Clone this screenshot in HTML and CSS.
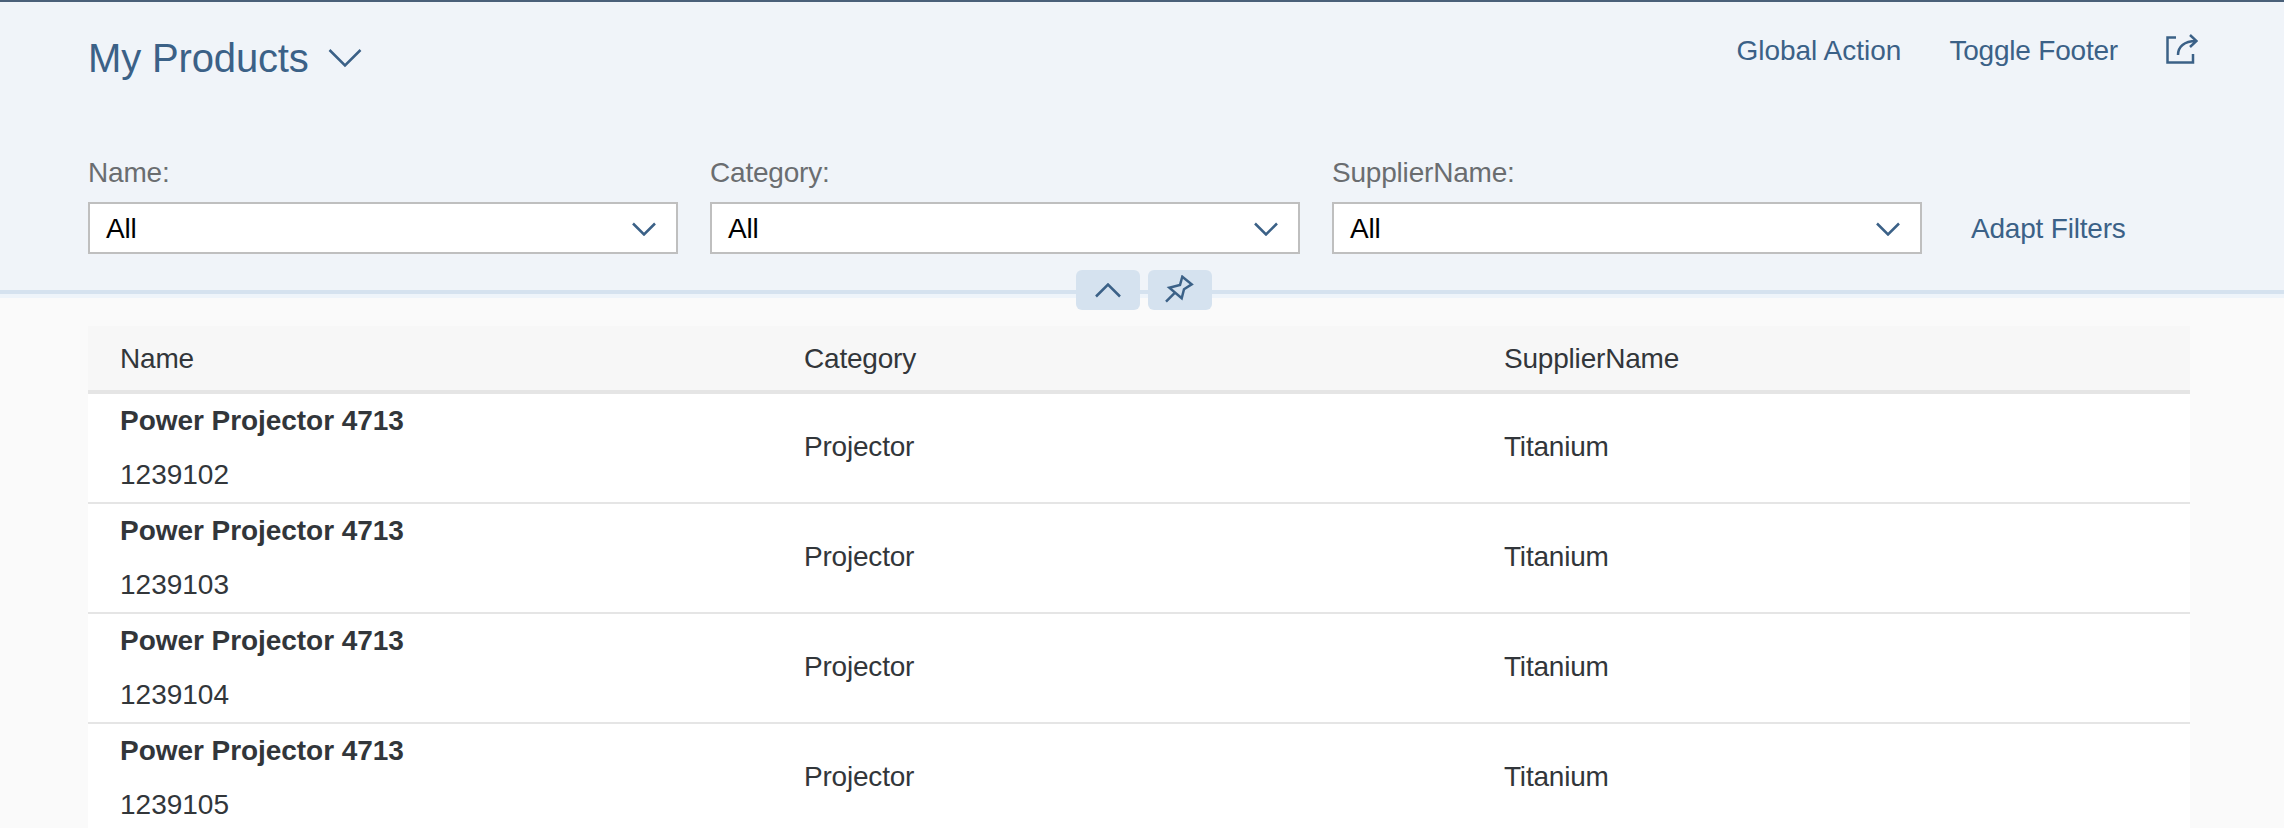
FILE: index.html
```html
<!DOCTYPE html>
<html lang="en">
<head>
    <meta charset="UTF-8">
    <meta name="viewport" content="width=device-width, initial-scale=1.0">
    <title>My Products</title>
    <link rel="stylesheet" href="styles.css">
</head>
<body>

<header class="page-header">
    <div class="title-row">
        <div class="title">
            <h1>My Products</h1>
            <svg class="title-arrow" width="34" height="20" viewBox="0 0 34 20"><path d="M1.500 2 17 17.500 32.500 2"/></svg>
        </div>
        <div class="actions">
            <a class="link global-action">Global Action</a>
            <a class="link">Toggle Footer</a>
            <svg class="share-icon" width="32" height="30" viewBox="0 0 32 30"><path d="M10 3.500H1.500V28.500H27V20M12 21C12 13 18 7 30 7M24 1l6.500 6L24 13"/></svg>
        </div>
    </div>
    <div class="filter-row">
        <div class="filter">
            <label>Name:</label>
            <div class="select"><span>All</span><svg width="24" height="14" viewBox="0 0 24 14"><path d="M1 1.500 12 12.500 23 1.500"/></svg></div>
        </div>
        <div class="filter">
            <label>Category:</label>
            <div class="select"><span>All</span><svg width="24" height="14" viewBox="0 0 24 14"><path d="M1 1.500 12 12.500 23 1.500"/></svg></div>
        </div>
        <div class="filter">
            <label>SupplierName:</label>
            <div class="select"><span>All</span><svg width="24" height="14" viewBox="0 0 24 14"><path d="M1 1.500 12 12.500 23 1.500"/></svg></div>
        </div>
        <a class="link adapt">Adapt Filters</a>
    </div>
    <div class="sash">
        <button class="sash-btn"><svg width="26" height="15" viewBox="0 0 26 15"><path d="M1 13.500 13 1.500 25 13.500"/></svg></button>
        <button class="sash-btn"><svg width="30" height="30" viewBox="0 0 30 30"><path d="M1 26.700 10 17.700M4.300 12.700 15 10 17.300 1.700 26.700 9.300 19 14.300 16.700 23.300Z"/></svg></button>
    </div>
</header>

<main class="content">
    <div class="table">
        <div class="row head">
            <div>Name</div>
            <div>Category</div>
            <div>SupplierName</div>
        </div>
        <div class="row">
            <div class="name-cell"><div class="product">Power Projector 4713</div><div class="product-id">1239102</div></div>
            <div>Projector</div>
            <div>Titanium</div>
        </div>
        <div class="row">
            <div class="name-cell"><div class="product">Power Projector 4713</div><div class="product-id">1239103</div></div>
            <div>Projector</div>
            <div>Titanium</div>
        </div>
        <div class="row">
            <div class="name-cell"><div class="product">Power Projector 4713</div><div class="product-id">1239104</div></div>
            <div>Projector</div>
            <div>Titanium</div>
        </div>
        <div class="row">
            <div class="name-cell"><div class="product">Power Projector 4713</div><div class="product-id">1239105</div></div>
            <div>Projector</div>
            <div>Titanium</div>
        </div>
    </div>
</main>

</body>
</html>
```

FILE: styles.css
```css
html, body {
    height: 828px;
    overflow: hidden;
}

body {
    margin: 0;
    font-family: "Liberation Sans", Arial, sans-serif;
    font-size: 28px;
    letter-spacing: -0.2px;
    color: #32363a;
    background-color: #fafafa;
}

svg {
    display: block;
    fill: none;
    stroke: #3b6187;
    stroke-width: 2.5;
}

.page-header {
    position: relative;
    box-sizing: border-box;
    height: 298px;
    padding: 0 88px;
    background-color: #f0f4f9;
    border-top: 2px solid #4a6079;
}

/* line under the header, with the lighter strip below it */
.page-header::after {
    content: "";
    position: absolute;
    left: 0;
    right: 0;
    top: 288px;
    height: 4px;
    background-color: #d5e2ef;
    border-bottom: 4px solid #eef4fa;
}

.title-row {
    display: flex;
    justify-content: space-between;
    height: 142px;
}

.title {
    display: flex;
    align-items: center;
    gap: 19px;
    height: 112px;
}

h1 {
    margin: 0;
    font-size: 40px;
    font-weight: normal;
    letter-spacing: -0.15px;
    color: #3b6187;
}

.actions {
    display: flex;
    align-items: center;
    height: 98px;
    margin-right: -2px;
}

.link {
    color: #3b6187;
}

.actions .link {
    margin-right: 48px;
}

.actions .global-action {
    letter-spacing: 0;
}

.share-icon {
    margin-bottom: 4px;
}

.filter-row {
    display: flex;
    align-items: flex-end;
    gap: 32px;
}

.filter {
    width: 590px;
}

.filter label {
    display: block;
    height: 58px;
    line-height: 58px;
    color: #6a6d70;
}

.select {
    display: flex;
    justify-content: space-between;
    align-items: center;
    box-sizing: border-box;
    height: 52px;
    padding: 2px 20px 0 16px;
    background-color: #fff;
    border: 2px solid #bfbfbf;
    color: #000;
}

.adapt {
    height: 52px;
    line-height: 54px;
    margin-left: 17px;
}

.sash {
    position: absolute;
    left: 1076px;
    top: 268px;
    z-index: 1;
    display: flex;
    gap: 8px;
}

.sash-btn {
    display: flex;
    justify-content: center;
    align-items: center;
    width: 64px;
    height: 40px;
    padding: 0;
    border: none;
    border-radius: 6px;
    background-color: #d5e2ef;
}

.content {
    padding: 28px 94px 0 88px;
}

.row {
    display: grid;
    grid-template-columns: 684px 700px 1fr;
    align-items: center;
    box-sizing: border-box;
    height: 110px;
    padding-left: 32px;
    padding-bottom: 2px;
    background-color: #fff;
    border-bottom: 2px solid #e5e5e5;
}

.head {
    height: 68px;
    padding-top: 2px;
    padding-bottom: 0;
    background-color: #f7f7f7;
    border-bottom-width: 4px;
}

.name-cell {
    padding-top: 2px;
}

.product {
    font-weight: bold;
    letter-spacing: -0.05px;
    margin-bottom: 22px;
}

.product-id {
    letter-spacing: 0;
}
```
